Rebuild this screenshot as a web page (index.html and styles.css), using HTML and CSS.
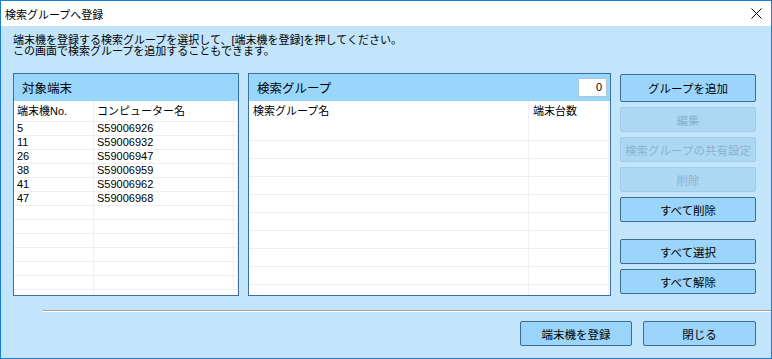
FILE: index.html
```html
<!DOCTYPE html>
<html lang="ja">
<head>
  <meta charset="UTF-8">
  <meta name="viewport" content="width=device-width, initial-scale=1.0">
  <title>検索グループへ登録</title>
  <link rel="stylesheet" href="styles.css">
</head>
<body>
  <div class="window">
    <div class="titlebar">
      <span class="title">検索グループへ登録</span>
      <svg class="close" width="11" height="11" viewBox="0 0 11 11">
        <path d="M0.5 0.5 L10.5 10.5 M10.5 0.5 L0.5 10.5" stroke="#000" stroke-width="1" fill="none"/>
      </svg>
    </div>

    <div class="content">
      <p class="intro">端末機を登録する検索グループを選択して、[端末機を登録]を押してください。<br>この画面で検索グループを追加することもできます。</p>

      <div class="main">
        <section class="panel panel-terminals">
          <div class="panel-head"><span>対象端末</span></div>
          <div class="panel-body terminals">
            <div class="row head"><div class="cell">端末機No.</div><div class="cell">コンピューター名</div><div class="cell"></div></div>
            <div class="row"><div class="cell">5</div><div class="cell">S59006926</div><div class="cell"></div></div>
            <div class="row"><div class="cell">11</div><div class="cell">S59006932</div><div class="cell"></div></div>
            <div class="row"><div class="cell">26</div><div class="cell">S59006947</div><div class="cell"></div></div>
            <div class="row"><div class="cell">38</div><div class="cell">S59006959</div><div class="cell"></div></div>
            <div class="row"><div class="cell">41</div><div class="cell">S59006962</div><div class="cell"></div></div>
            <div class="row"><div class="cell">47</div><div class="cell">S59006968</div><div class="cell"></div></div>
            <div class="row"><div class="cell"></div><div class="cell"></div><div class="cell"></div></div>
            <div class="row"><div class="cell"></div><div class="cell"></div><div class="cell"></div></div>
            <div class="row"><div class="cell"></div><div class="cell"></div><div class="cell"></div></div>
            <div class="row"><div class="cell"></div><div class="cell"></div><div class="cell"></div></div>
            <div class="row"><div class="cell"></div><div class="cell"></div><div class="cell"></div></div>
            <div class="row"><div class="cell"></div><div class="cell"></div><div class="cell"></div></div>
            <div class="row"><div class="cell"></div><div class="cell"></div><div class="cell"></div></div>
          </div>
        </section>

        <section class="panel panel-groups">
          <div class="panel-head">
            <span>検索グループ</span>
            <div class="count">0</div>
          </div>
          <div class="panel-body groups">
            <div class="row head"><div class="cell">検索グループ名</div><div class="cell">端末台数</div><div class="cell"></div></div>
            <div class="row"><div class="cell"></div><div class="cell"></div><div class="cell"></div></div>
            <div class="row"><div class="cell"></div><div class="cell"></div><div class="cell"></div></div>
            <div class="row"><div class="cell"></div><div class="cell"></div><div class="cell"></div></div>
            <div class="row"><div class="cell"></div><div class="cell"></div><div class="cell"></div></div>
            <div class="row"><div class="cell"></div><div class="cell"></div><div class="cell"></div></div>
            <div class="row"><div class="cell"></div><div class="cell"></div><div class="cell"></div></div>
            <div class="row"><div class="cell"></div><div class="cell"></div><div class="cell"></div></div>
            <div class="row"><div class="cell"></div><div class="cell"></div><div class="cell"></div></div>
            <div class="row"><div class="cell"></div><div class="cell"></div><div class="cell"></div></div>
            <div class="row"><div class="cell"></div><div class="cell"></div><div class="cell"></div></div>
          </div>
        </section>

        <div class="actions">
          <button class="btn btn-add">グループを追加</button>
          <button class="btn" disabled>編集</button>
          <button class="btn" disabled>検索グループの共有設定</button>
          <button class="btn" disabled>削除</button>
          <button class="btn">すべて削除</button>
          <button class="btn btn-select">すべて選択</button>
          <button class="btn">すべて解除</button>
        </div>
      </div>

      <div class="sep"></div>

      <div class="footer">
        <button class="btn btn-register">端末機を登録</button>
        <button class="btn btn-close">閉じる</button>
      </div>
    </div>
  </div>
</body>
</html>
```

FILE: styles.css
```css
* {
  box-sizing: border-box;
}
body {
  margin: 0;
  font-family: "Liberation Sans", "Noto Sans CJK JP", sans-serif;
  font-size: 11px;
  color: #000;
  background: #fff;
}
.window {
  width: 772px;
  height: 359px;
  border: 1px solid #1a7fd4;
  display: flex;
  flex-direction: column;
}
.titlebar {
  height: 25px;
  flex: none;
  background: #fff;
  display: flex;
  align-items: center;
  justify-content: space-between;
  padding: 0 9px 0 4px;
}
.title {
  font-size: 11px;
}
.content {
  flex: 1;
  background: #c3e5fb;
}
.intro {
  margin: 0;
  padding: 9px 0 0 12px;
  line-height: 11px;
  height: 31px;
}
.main {
  display: flex;
  margin-top: 16px;
  padding-left: 12px;
  height: 223px;
}
.panel {
  border: 1px solid #3a6ea5;
  background: #fff;
  display: flex;
  flex-direction: column;
  margin-right: 9px;
}
.panel-terminals {
  width: 226px;
}
.panel-groups {
  width: 363px;
}
.panel-head {
  height: 27px;
  flex: none;
  background: #99d6fb;
  display: flex;
  align-items: center;
  justify-content: space-between;
  padding: 0 3px 0 8px;
  font-size: 12.5px;
}
.count {
  width: 29px;
  height: 19px;
  background: #fff;
  border: 1px solid #a9c7dc;
  text-align: right;
  padding-right: 4px;
  line-height: 17px;
  font-size: 11px;
}
.panel-body {
  flex: 1;
  overflow: hidden;
}
.row {
  display: grid;
}
.cell {
  border-right: 1px solid #efefef;
  border-bottom: 1px solid #efefef;
  white-space: nowrap;
  overflow: hidden;
}
.terminals .row {
  grid-template-columns: 80px 140px 1fr;
  height: 14px;
}
.terminals .cell {
  padding-left: 3px;
  line-height: 13px;
}
.terminals .row.head {
  height: 21px;
}
.terminals .row.head .cell {
  line-height: 20px;
}
.groups .row {
  grid-template-columns: 280px 80px 1fr;
  height: 18px;
}
.groups .cell {
  padding-left: 4px;
}
.groups .row.head {
  height: 22px;
}
.groups .row.head .cell {
  border-bottom: none;
  line-height: 20px;
}
.actions {
  width: 136px;
  display: flex;
  flex-direction: column;
  gap: 5px;
  padding-top: 1px;
}
.btn {
  height: 25px;
  background: #9bd5fb;
  border: 1px solid #3f6b8c;
  border-radius: 2px;
  font-family: inherit;
  font-size: 11.5px;
  color: #000;
  padding: 0;
  white-space: nowrap;
}
.btn-add {
  height: 28px;
}
.btn:disabled {
  background: #acd8f4;
  border-color: #a1cbe7;
  color: #8ab2ce;
}
.btn-select {
  margin-top: 12px;
}
.sep {
  margin: 14px 0 0 42px;
  height: 2px;
  border-top: 1px solid #a0a0a0;
  border-bottom: 1px solid #fff;
}
.footer {
  display: flex;
  justify-content: flex-end;
  gap: 11px;
  padding: 9px 15px 0 0;
}
.btn-register {
  width: 112px;
}
.btn-close {
  width: 113px;
}
```
